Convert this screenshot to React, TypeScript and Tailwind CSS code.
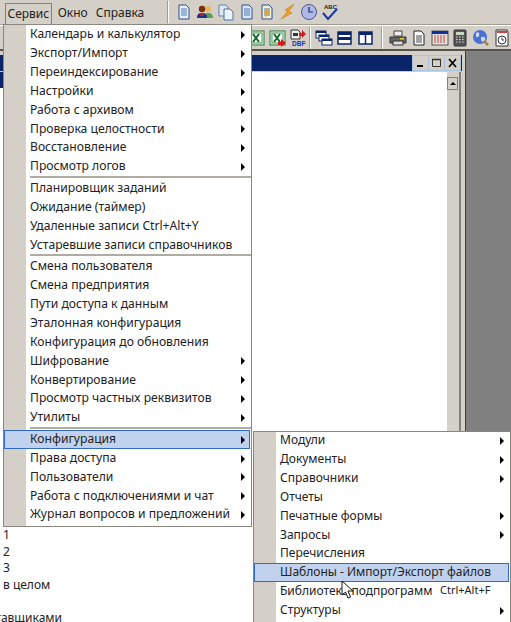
import React from "react";

type Item = { t: string; arrow?: boolean; sep?: boolean; sel?: boolean; sc?: string };

const main: Item[] = [
  { t: "Календарь и калькулятор", arrow: true },
  { t: "Экспорт/Импорт", arrow: true },
  { t: "Переиндексирование", arrow: true },
  { t: "Настройки", arrow: true },
  { t: "Работа с архивом", arrow: true },
  { t: "Проверка целостности", arrow: true },
  { t: "Восстановление", arrow: true },
  { t: "Просмотр логов", arrow: true, sep: true },
  { t: "Планировщик заданий" },
  { t: "Ожидание (таймер)" },
  { t: "Удаленные записи Ctrl+Alt+Y" },
  { t: "Устаревшие записи справочников", sep: true },
  { t: "Смена пользователя" },
  { t: "Смена предприятия" },
  { t: "Пути доступа к данным" },
  { t: "Эталонная конфигурация" },
  { t: "Конфигурация до обновления" },
  { t: "Шифрование", arrow: true },
  { t: "Конвертирование", arrow: true },
  { t: "Просмотр частных реквизитов", arrow: true },
  { t: "Утилиты", arrow: true, sep: true },
  { t: "Конфигурация", arrow: true, sel: true },
  { t: "Права доступа", arrow: true },
  { t: "Пользователи", arrow: true },
  { t: "Работа с подключениями и чат", arrow: true },
  { t: "Журнал вопросов и предложений", arrow: true },
];

const sub: Item[] = [
  { t: "Модули", arrow: true },
  { t: "Документы", arrow: true },
  { t: "Справочники", arrow: true },
  { t: "Отчеты" },
  { t: "Печатные формы", arrow: true },
  { t: "Запросы", arrow: true },
  { t: "Перечисления" },
  { t: "Шаблоны - Импорт/Экспорт файлов", sel: true },
  { t: "Библиотека подпрограмм", sc: "Ctrl+Alt+F" },
  { t: "Структуры", arrow: true },
];

function Row({ it }: { it: Item }) {
  return (
    <div className={it.sep ? "h-[18.85px] mb-[3px] relative flex items-center" : "h-[18.85px] relative flex items-center"}>
      {it.sel && (
        <div className="absolute left-[-22px] right-[1px] top-0 bottom-0 bg-[#c1d2ee] border border-[#316ac5]" />
      )}
      <span className="relative whitespace-nowrap pl-[4px] text-[#222]">{it.t}</span>
      {it.sc && <span className="absolute left-[164px] top-[2px] text-[11px] text-[#222]">{it.sc}</span>}
      {it.arrow && (
        <span className="absolute right-[6px] top-[6px] w-0 h-0 border-y-[4px] border-y-transparent border-l-[4px] border-l-black" />
      )}
      {it.sep && <div className="absolute left-[4px] right-0 bottom-[-2px] h-[2px] bg-[#b0aca4]" />}
    </div>
  );
}

function S({ w = 18, h = 18, children }: { w?: number; h?: number; children: React.ReactNode }) {
  return (
    <svg width={w} height={h} viewBox={`0 0 ${w} ${h}`} className="shrink-0">
      {children}
    </svg>
  );
}

const Doc = ({ fill = "#e8f0fa" }: { fill?: string }) => (
  <>
    <path d="M4 2h7l3 3v11H4z" fill={fill} stroke="#2f4f8f" />
    <path d="M6 6h6M6 8h6M6 10h6M6 12h6" stroke="#4f78b8" />
  </>
);

const Top = [
  <S key="a"><Doc /></S>,
  <S key="b">
    <circle cx="12" cy="6" r="3" fill="#e8b860" />
    <path d="M8 15c0-4 1-5 4-5s5 1 5 5z" fill="#5aa050" />
    <circle cx="6" cy="6" r="3.2" fill="#7a3010" />
    <path d="M1 15c0-4 2-5 5-5s5 1 5 5z" fill="#20308a" />
    <rect x="4" y="10" width="4" height="3" fill="#c02020" />
  </S>,
  <S key="c">
    <path d="M2 2h7l2 2v9H2z" fill="#dfe8f4" stroke="#6080b0" />
    <path d="M7 6h6l3 3v8H7z" fill="#eef3fa" stroke="#4870b0" />
  </S>,
  <S key="d"><Doc fill="#dbe7f7" /></S>,
  <S key="e">
    <Doc fill="#f4f0d8" />
    <path d="M11 4L6 10h3l-2 5 5-6H9z" fill="#e8a010" />
  </S>,
  <S key="f">
    <path d="M15 1L6 7l3 1-7 8 11-6-3-2z" fill="#f0a020" stroke="#c86808" strokeWidth=".5" />
  </S>,
  <S key="g">
    <circle cx="9" cy="9" r="7.5" fill="#b0b8e8" stroke="#505890" />
    <path d="M9 4v5h4" fill="none" stroke="#202860" strokeWidth="1.2" />
  </S>,
  <S key="h">
    <text x="3" y="6" fontSize="6" fontWeight="700" fontFamily="Liberation Sans, sans-serif" fill="#222">ABC</text>
    <path d="M2 10l5 6L16 6" fill="none" stroke="#1838a0" strokeWidth="2" />
  </S>,
];

const Excel = ({ arrow }: { arrow?: boolean }) => (
  <S>
    <rect x="1" y="2" width="15" height="14" fill="#e8f0e0" stroke="#2a7a3a" />
    <rect x="3" y="4" width="11" height="10" fill="#fff" stroke="#4a9a5a" />
    <path d="M5 5l6 8M11 5l-6 8" stroke="#106a28" strokeWidth="2" />
    {arrow && <path d="M9 13h3v-3l5 4-5 4v-2H9z" fill="#d81818" />}
  </S>
);

const Win = ({ k }: { k: number }) => (
  <S>
    {k === 0 && (
      <>
        <rect x="1" y="2" width="10" height="7" fill="#fff" stroke="#0a246a" />
        <rect x="1" y="2" width="10" height="2" fill="#0a246a" />
        <rect x="4" y="6" width="10" height="6" fill="#fff" stroke="#0a246a" />
        <rect x="4" y="6" width="10" height="2" fill="#0a246a" />
        <rect x="7" y="10" width="10" height="6" fill="#fff" stroke="#0a246a" />
        <rect x="7" y="10" width="10" height="2" fill="#0a246a" />
      </>
    )}
    {k === 1 && (
      <>
        <rect x="2" y="3" width="13" height="12" fill="#fff" stroke="#0a246a" strokeWidth="1.5" />
        <rect x="2" y="3" width="13" height="3" fill="#0a246a" />
        <rect x="2" y="8" width="13" height="3" fill="#0a246a" />
      </>
    )}
    {k === 2 && (
      <>
        <rect x="2" y="3" width="13" height="12" fill="#fff" stroke="#0a246a" strokeWidth="1.5" />
        <rect x="2" y="3" width="13" height="3" fill="#0a246a" />
        <path d="M8.5 3v12" stroke="#0a246a" strokeWidth="1.5" />
      </>
    )}
  </S>
);

const Bottom = [
  <Win key="w0" k={0} />,
  <Win key="w1" k={1} />,
  <Win key="w2" k={2} />,
];

const Bottom2 = [
  <S key="p">
    <path d="M5 2h8v5H5z" fill="#eee" stroke="#444" />
    <path d="M1 8h16v6H1z" fill="#666" stroke="#333" />
    <rect x="4" y="12" width="10" height="4" fill="#ddd" stroke="#333" />
    <rect x="11" y="9" width="4" height="1.5" fill="#e8d020" />
  </S>,
  <S key="d">
    <path d="M4 2h7l3 3v11H4z" fill="#fff" stroke="#222" />
    <path d="M6 7h6M6 9h6M6 11h6M6 13h6" stroke="#444" />
  </S>,
  <S key="cal">
    <rect x="1" y="2" width="16" height="14" fill="#e8e0d8" stroke="#555" />
    <rect x="1" y="2" width="16" height="3" fill="#1030a0" />
    <path d="M3 7h12M3 9h12M3 11h12M3 13h12" stroke="#c04040" strokeWidth="1" strokeDasharray="2 1" />
  </S>,
  <S key="calc">
    <rect x="3" y="1" width="12" height="16" rx="1" fill="#555" stroke="#333" />
    <rect x="5" y="3" width="8" height="3" fill="#c8d8c8" />
    <path d="M5 8h8M5 10.500h8M5 13h8" stroke="#ddd" strokeWidth="1.2" strokeDasharray="1.500 1.500" />
  </S>,
  <S key="g">
    <circle cx="8" cy="8" r="7" fill="#4870d0" />
    <path d="M4 4c3-2 4 1 3 3S3 9 4 4zM9 8c3-1 5 0 4 3s-5 2-4-3z" fill="#c8d8f0" />
    <path d="M12 12l4 4" stroke="#a08050" strokeWidth="2.500" />
  </S>,
  <S key="cl">
    <path d="M3 1h11l1 2v14H3z" fill="#fff" stroke="#333" />
    <rect x="4" y="2" width="10" height="2" fill="#d04040" />
    <circle cx="9" cy="11" r="4" fill="#fff" stroke="#333" />
    <path d="M9 8.500V11h2" fill="none" stroke="#333" />
  </S>,
];

const Sep = () => <div className="w-[2px] h-[22px] border-l border-l-[#a09c94] border-r border-r-white shrink-0" />;

const Dbf = () => (
  <S>
    <path d="M2 1h7l2 2v7H2z" fill="#eee" stroke="#333" />
    <rect x="4" y="4" width="5" height="3" fill="#333" />
    <path d="M10 4h3V1l4 4-4 4V7h-3z" fill="#e01818" />
    <text x="3" y="17" fontSize="6.500" fontWeight="700" fontFamily="Liberation Sans, sans-serif" fill="#1030c0">DBF</text>
  </S>
);

const WinBtn = ({ children }: { children: React.ReactNode }) => (
  <div className="w-[15px] h-[14px] bg-[#d4d0c8] outline outline-1 outline-[#a8c4e0] flex items-center justify-center">
    <svg width="11" height="10" viewBox="0 0 11 10">
      {children}
    </svg>
  </div>
);

export default function App() {
  const font = { fontFamily: '"Noto Sans", "Open Sans", sans-serif' };
  return (
    <div
      className="relative w-[511px] h-[622px] overflow-hidden bg-[#d4d0c8] flex flex-col text-[12px] leading-none text-[#222]"
      style={font}
    >
      {/* menu bar + top toolbar */}
      <div className="h-[25px] flex items-center border-b border-b-[#a09c94] shrink-0">
        <div className="ml-[5px] px-[1.500px] h-[21px] flex items-center border border-[#808080] border-b-0 self-end">
          Сервис
        </div>
        <span className="ml-[6px] pt-[1px]">Окно</span>
        <span className="ml-[8px] pt-[1px]">Справка</span>
        <div className="ml-[23px] mr-[6px]">
          <Sep />
        </div>
        <div className="flex gap-[2.800px]">{Top}</div>
      </div>
      {/* second toolbar */}
      <div className="h-[26px] flex items-center pl-[248px] border-t border-t-white border-b-2 border-b-[#55534e] shrink-0">
        <div className="flex gap-[2.500px]">
          <Excel />
          <Excel arrow />
          <Dbf />
        </div>
        <div className="mx-[3px] ml-[2px]">
          <Sep />
        </div>
        <div className="flex gap-[3px] ml-[1px]">{Bottom}</div>
        <div className="mx-[6px]">
          <Sep />
        </div>
        <div className="flex gap-[2.800px]">{Bottom2}</div>
      </div>
      {/* workspace */}
      <div className="flex-1 flex min-h-0">
        <div className="flex-1 flex flex-col min-w-0 pt-[4px] pr-[3px] border-r border-r-[#404040] bg-[#d4d0c8]">
          <div className="h-[16px] bg-[#0a246a] flex items-center justify-end pr-[2px] gap-[1px] shrink-0">
            <WinBtn>
              <rect x="2" y="7" width="6" height="2" fill="#000" />
            </WinBtn>
            <WinBtn>
              <path d="M1.500 1.500h8v7h-8z" fill="none" stroke="#333" />
              <path d="M1 1.500h9" stroke="#333" strokeWidth="1.500" />
            </WinBtn>
            <WinBtn>
              <path d="M2 1l7 8M9 1l-7 8" stroke="#000" strokeWidth="1.600" />
            </WinBtn>
          </div>
          <div className="flex-1 flex min-h-0 mt-[1px] pr-[1px] border-r-2 border-r-[#808080] mr-[1px]">
            <div className="flex-1 min-w-0 bg-white flex flex-col">
              <div className="h-[16px] w-[3px] bg-[#0a246a] shrink-0" />
              <div
                className="pl-[3px] pt-[439px] flex flex-col whitespace-nowrap"
                style={{ lineHeight: "16.600px" }}
              >
                <div>1</div>
                <div>2</div>
                <div>3</div>
                <div>в целом</div>
                <div>&nbsp;</div>
                <div className="ml-[-28px]">поставщиками</div>
              </div>
            </div>
            <div className="w-[12px] bg-[#d4d0c8] border-l border-l-white flex flex-col shrink-0">
              <div className="h-[13px] mt-[5px] border border-[#808080] bg-[#d4d0c8] flex items-center justify-center">
                <span className="w-0 h-0 border-x-[3px] border-x-transparent border-b-[3px] border-b-black" />
              </div>
            </div>
          </div>
        </div>
        <div className="w-[45px] bg-[#808080] shrink-0" />
      </div>

      {/* main menu */}
      <div className="absolute left-[3px] top-[24px] w-[249px] h-[503px] bg-white border border-[#8a8780] flex text-[12.15px]">
        <div className="w-[22px] bg-[#d4d0c8] shrink-0" />
        <div className="flex-1 min-w-0">
          {main.map((it) => (
            <Row key={it.t} it={it} />
          ))}
        </div>
      </div>

      {/* submenu */}
      <div className="absolute left-[253px] top-[431px] w-[258px] h-[200px] bg-white border border-[#8a8780] flex">
        <div className="w-[22px] bg-[#d4d0c8] shrink-0" />
        <div className="flex-1 min-w-0 mt-[-1px]">
          {sub.map((it) => (
            <Row key={it.t} it={it} />
          ))}
        </div>
      </div>

      {/* cursor */}
      <svg width="14" height="20" viewBox="0 0 14 20" className="absolute left-[341px] top-[580px]">
        <path d="M1 1v14l3.500-3 2.500 6 2.500-1-2.500-6h5z" fill="#fff" stroke="#111" />
      </svg>
    </div>
  );
}
